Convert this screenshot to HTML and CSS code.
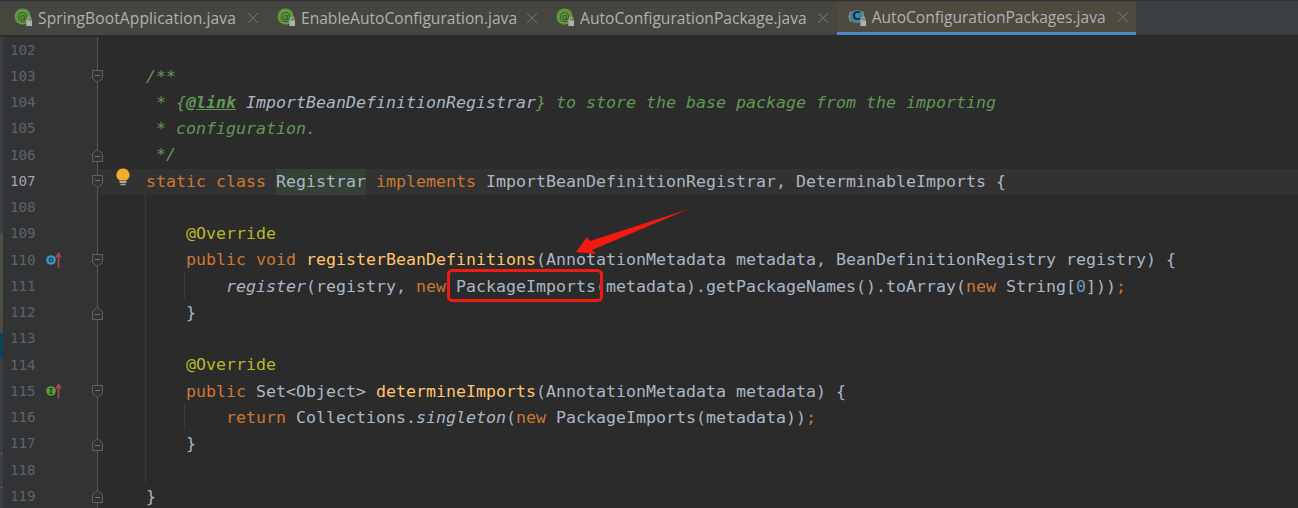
FILE: index.html
```html
<!DOCTYPE html>
<html lang="en">
<head>
<meta charset="utf-8">
<title>AutoConfigurationPackages.java</title>
<link rel="stylesheet" href="styles.css">
</head>
<body>
<svg class="defs" width="0" height="0" aria-hidden="true">
  <defs>
    <g id="fold-start"><path d="M.5.5h10v8l-5 4-5-4z" fill="#313335" stroke="#5f6264"/><path d="M3 5.5h5" stroke="#6f7274"/></g>
    <g id="fold-end"><path d="M.5 12.5h10v-8l-5-4-5 4z" fill="#313335" stroke="#5f6264"/><path d="M3 7.5h5" stroke="#6f7274"/></g>
    <g id="lock"><rect x="13" y="13" width="6" height="6" fill="#afb1b3"/><path d="M14 13v-1.500a2 2 0 0 1 4 0V13" fill="none" stroke="#afb1b3"/></g>
    <g id="ico-a"><circle cx="9" cy="9" r="8.500" fill="#62973f"/><text x="9" y="13" class="ico-at">@</text><use href="#lock"/></g>
    <g id="ico-c"><path d="M3.500 3.500a8 8 0 0 0 0 11" fill="none" stroke="#8a8d8f" stroke-width="1.500"/><path d="M14.500 3.500a8 8 0 0 1 0 11" fill="none" stroke="#8a8d8f" stroke-width="1.500"/><circle cx="9" cy="9" r="7" fill="#40869f"/><text x="9" y="13" class="ico-c">C</text><use href="#lock"/></g>
    <g id="close"><path d="M1 1l9 9M10 1l-9 9" stroke="#6a6c6d" stroke-width="1" fill="none"/></g>
    <path id="up" d="M12.500 15.500V2M10 5.500 12.500 1.500 15 5.500" fill="none" stroke="#a8474a" stroke-width="1.700"/>
  </defs>
</svg>
<div class="app">
  <nav class="tabs">
    <div class="tab t-spring"><svg class="tab-ico" viewBox="0 0 20 20"><use href="#ico-a"/></svg><span class="tab-name">SpringBootApplication.java</span><svg class="tab-x" viewBox="0 0 11 11"><use href="#close"/></svg></div>
    <div class="tab t-enable"><svg class="tab-ico" viewBox="0 0 20 20"><use href="#ico-a"/></svg><span class="tab-name">EnableAutoConfiguration.java</span><svg class="tab-x" viewBox="0 0 11 11"><use href="#close"/></svg></div>
    <div class="tab t-package"><svg class="tab-ico" viewBox="0 0 20 20"><use href="#ico-a"/></svg><span class="tab-name">AutoConfigurationPackage.java</span><svg class="tab-x" viewBox="0 0 11 11"><use href="#close"/></svg></div>
    <div class="tab active"><svg class="tab-ico" viewBox="0 0 20 20"><use href="#ico-c"/></svg><span class="tab-name">AutoConfigurationPackages.java</span><svg class="tab-x" viewBox="0 0 11 11"><use href="#close"/></svg></div>
  </nav>
  <main class="editor">
    <div class="row"><div class="gutter"><span class="num">102</span></div><div class="code"></div></div>
    <div class="row"><div class="gutter"><span class="num">103</span><svg class="fold" viewBox="0 0 11 13"><use href="#fold-start"/></svg></div><div class="code"><span class="doc">    /**</span></div></div>
    <div class="row"><div class="gutter"><span class="num">104</span></div><div class="code"><span class="doc">     * {<b class="tag">@link</b> </span><i class="ref">ImportBeanDefinitionRegistrar</i><span class="doc">} to store the base package from the importing</span></div></div>
    <div class="row"><div class="gutter"><span class="num">105</span></div><div class="code"><span class="doc">     * configuration.</span></div></div>
    <div class="row"><div class="gutter"><span class="num">106</span><svg class="fold" viewBox="0 0 11 13"><use href="#fold-end"/></svg></div><div class="code"><span class="doc">     */</span></div></div>
    <div class="row"><div class="gutter"><span class="num current">107</span><svg class="fold" viewBox="0 0 11 13"><use href="#fold-start"/></svg></div><div class="code caret">    <span class="kw">static class</span> <span class="hit">Registrar</span> <span class="kw">implements</span> ImportBeanDefinitionRegistrar, DeterminableImports {</div></div>
    <div class="row"><div class="gutter"><span class="num">108</span></div><div class="code"></div></div>
    <div class="row"><div class="gutter"><span class="num">109</span></div><div class="code">        <span class="ann">@Override</span></div></div>
    <div class="row"><div class="gutter"><span class="num">110</span><svg class="mark" viewBox="0 0 16 16"><circle cx="5" cy="8" r="4.800" fill="#3f96c0"/><circle cx="5" cy="8" r="1.800" fill="none" stroke="#1e3a4a" stroke-width="1.300"/><use href="#up"/></svg><svg class="fold" viewBox="0 0 11 13"><use href="#fold-start"/></svg></div><div class="code">        <span class="kw">public void</span> <span class="fn">registerBeanDefinitions</span>(AnnotationMetadata metadata, BeanDefinitionRegistry registry) {</div></div>
    <div class="row"><div class="gutter"><span class="num">111</span></div><div class="code">            <i>register</i>(registry, <span class="kw">new</span> PackageImports(metadata).getPackageNames().toArray(<span class="kw">new</span> String[<span class="lit">0</span>]))<span class="kw">;</span></div></div>
    <div class="row"><div class="gutter"><span class="num">112</span><svg class="fold" viewBox="0 0 11 13"><use href="#fold-end"/></svg></div><div class="code">        }</div></div>
    <div class="row"><div class="gutter"><span class="num">113</span></div><div class="code"></div></div>
    <div class="row"><div class="gutter"><span class="num">114</span></div><div class="code">        <span class="ann">@Override</span></div></div>
    <div class="row"><div class="gutter"><span class="num">115</span><svg class="mark" viewBox="0 0 16 16"><circle cx="5" cy="8" r="4.800" fill="#5c9a3c"/><path d="M5 5.500v5M3.500 5.500h3M3.500 10.500h3" fill="none" stroke="#1f3318" stroke-width="1.200"/><use href="#up"/></svg><svg class="fold" viewBox="0 0 11 13"><use href="#fold-start"/></svg></div><div class="code">        <span class="kw">public</span> Set&lt;Object&gt; <span class="fn">determineImports</span>(AnnotationMetadata metadata) {</div></div>
    <div class="row"><div class="gutter"><span class="num">116</span></div><div class="code">            <span class="kw">return</span> Collections.<i>singleton</i>(<span class="kw">new</span> PackageImports(metadata))<span class="kw">;</span></div></div>
    <div class="row"><div class="gutter"><span class="num">117</span><svg class="fold" viewBox="0 0 11 13"><use href="#fold-end"/></svg></div><div class="code">        }</div></div>
    <div class="row"><div class="gutter"><span class="num">118</span></div><div class="code"></div></div>
    <div class="row"><div class="gutter"><span class="num">119</span><svg class="fold" viewBox="0 0 11 13"><use href="#fold-end"/></svg></div><div class="code">    }</div></div>
  </main>
  <div class="stripe s-green"></div>
  <div class="stripe s-brown"></div>
  <div class="stripe s-blue"></div>
  <div class="stripe s-line-a"></div>
  <div class="stripe s-line-b"></div>
  <div class="guide g-class"></div>
  <div class="guide g-body-a"></div>
  <div class="guide g-body-b"></div>
  <svg class="bulb" viewBox="0 0 14 19"><path d="M7 .5a6.500 6.500 0 0 0-3.500 12h7A6.500 6.500 0 0 0 7 .5z" fill="#f4ad2a"/><path d="M3.500 14h7" stroke="#d0d0d0" stroke-width="1.500"/><path d="M4.500 16.500h5" stroke="#a8a8a8" stroke-width="1.500"/></svg>
  <svg class="markup" viewBox="0 0 1298 508">
    <polygon points="689,209 590,241 587,237 576,252 596,254 592,250" fill="#f5190f"/>
    <rect x="448.500" y="270.500" width="153" height="30" rx="4" fill="none" stroke="#f01a12" stroke-width="3"/>
  </svg>
</div>
</body>
</html>
```
FILE: styles.css
```css
* { box-sizing: border-box; }
html, body { margin: 0; height: 100%; background: #2b2b2b; overflow: hidden; }
.defs { position: absolute; }
.app { position: relative; width: 1298px; height: 508px; overflow: hidden; }

.tabs {
  display: flex;
  height: 35px;
  padding-top: 1px;
  background: #3c3f41;
  border-top: 1px solid #323232;
  border-bottom: 1px solid #36383a;
  font: 15.600px "Open Sans", sans-serif;
  color: #afb1b3;
}
.tab {
  display: flex;
  align-items: center;
  height: 33px;
  padding: 0 5px 2px 14px;
  background: #45463f;
}
.t-spring .tab-name { letter-spacing: 0.1px; }
.t-enable { padding-left: 13px; padding-right: 4px; }
.t-enable .tab-x { margin-left: 9px; }
.t-package { padding-left: 14px; padding-right: 8px; }
.t-package .tab-x { margin-left: 10px; }
.tab.active {
  background: #4e4a3f;
  border-bottom: 3px solid #4a88c7;
  padding: 0 7px 0 11px;
}
.tab-ico { width: 19px; height: 19px; margin-right: 5px; }
.tab-name { white-space: nowrap; }
.tab-x { margin-left: 11px; width: 12px; height: 12px; }
.ico-at { font: 11px "DejaVu Sans", sans-serif; fill: #2e4a20; text-anchor: middle; }
.ico-c { font: bold 12px "DejaVu Sans", sans-serif; fill: #17323d; text-anchor: middle; }

.editor { display: flex; flex-direction: column; padding-top: 2.400px; }
.row { display: flex; height: 26.25px; flex: none; }
.gutter {
  display: flex;
  align-items: center;
  width: 98px;
  flex: none;
  padding-left: 7px;
  padding-bottom: 2px;
  background: #313335;
  border-left: 3px solid #3c3f41;
  border-right: 1px solid #555759;
  font: 14.200px "DejaVu Sans Mono", monospace;
  color: #606366;
}
.num { width: 26px; }
.num.current { color: #a4a3a3; }
.mark { width: 16px; height: 16px; margin-left: 10px; }
.fold { width: 11px; height: 13px; margin-left: auto; margin-right: -6px; position: relative; top: 1px; }
.code {
  flex: 1;
  padding-left: 8px;
  white-space: pre;
  font: 16.610px/26.250px "DejaVu Sans Mono", monospace;
  color: #a9b7c6;
}
.caret { background: #323232; }
.kw { color: #cc7832; }
.doc { color: #629755; font-style: italic; }
.tag { font-weight: bold; text-decoration: underline; }
.ref { color: #a9b7c6; }
.ann { color: #bbb529; }
.fn { color: #ffc66d; }
.lit { color: #6897bb; }
.hit { display: inline-block; background: #344134; }

.stripe { position: absolute; left: 0; width: 3px; }
.s-green { top: 233px; height: 75px; background: #4a5042; }
.s-brown { top: 308px; height: 25px; background: #4f4a3f; }
.s-blue { top: 333px; height: 25px; background: #10405f; }
.s-line-a { top: 453px; height: 1px; background: #55585a; }
.s-line-b { top: 487px; height: 1px; background: #55585a; }

.guide { position: absolute; width: 1px; background: #3b3b3b; }
.g-class { left: 145px; top: 194px; height: 289px; }
.g-body-a { left: 184px; top: 273px; height: 26px; }
.g-body-b { left: 184px; top: 404px; height: 26px; }
.bulb { position: absolute; left: 116px; top: 168px; width: 14px; height: 19px; }
.markup { position: absolute; left: 0; top: 0; width: 1298px; height: 508px; pointer-events: none; }
```
